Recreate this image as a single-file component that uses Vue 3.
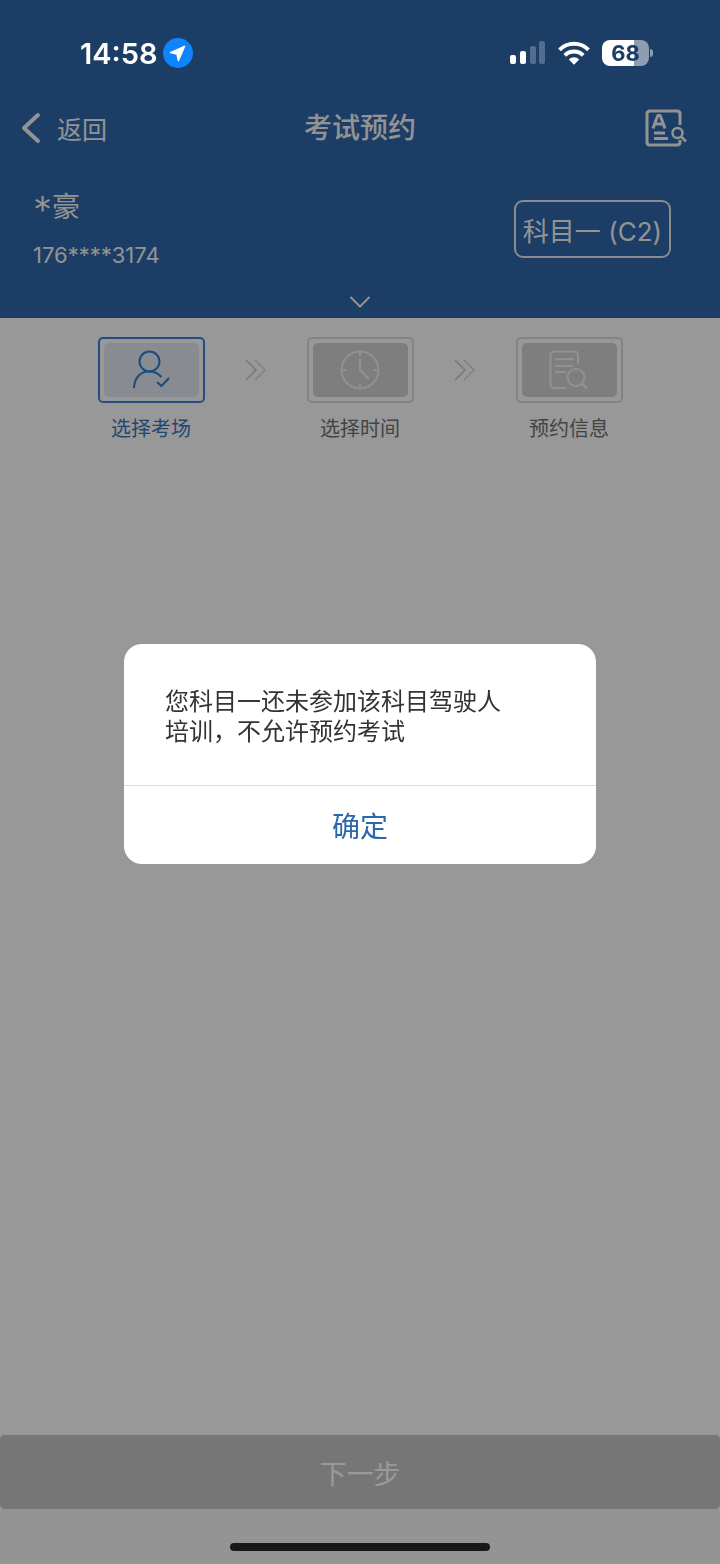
<script setup>
import { ref } from 'vue'

const steps = [
    { icon: 'user', label: '选择考场' },
    { icon: 'clock', label: '选择时间' },
    { icon: 'doc', label: '预约信息' },
]
const current = ref(0)
const showDialog = ref(true)
</script>

<template>
    <div class="page">
        <header class="header">
            <div class="status-bar">
                <div class="status-left">
                    <span class="time">14:58</span>
                    <svg width="30" height="30" viewBox="0 0 30 30">
                        <circle cx="15" cy="15" r="15" fill="#0f84fd" />
                        <path d="M21.5 8.5 L7.5 14.6 L14 16 L15.4 22.5 Z" fill="#fff" stroke="#fff" stroke-width="1.5"
                            stroke-linejoin="round" />
                    </svg>
                </div>
                <div class="status-right">
                    <svg width="36" height="24" viewBox="0 0 36 24" fill="#fff">
                        <rect x="0" y="14" width="6" height="9" rx="2" />
                        <rect x="10" y="10" width="6" height="13" rx="2" />
                        <rect x="20" y="5" width="6" height="18" rx="2" opacity=".25" />
                        <rect x="29" y="0" width="6" height="23" rx="2" opacity=".25" />
                    </svg>
                    <svg width="32" height="24" viewBox="0 0 32 24" fill="none" stroke="#fff" stroke-width="4">
                        <path d="M1.5 8.8 A20.5 20.5 0 0 1 30.5 8.8" />
                        <path d="M6.8 14.3 A13 13 0 0 1 25.2 14.3" />
                        <path d="M10.8 18.4 A7.4 7.4 0 0 1 21.2 18.4 L16 23.8 Z" fill="#fff" stroke="none" />
                    </svg>
                    <div class="battery"><span class="battery-level">68</span></div>
                </div>
            </div>
            <nav class="nav">
                <button class="back" type="button">
                    <svg width="20" height="34" viewBox="0 0 20 34" fill="none" stroke="currentColor" stroke-width="4"
                        stroke-linecap="round" stroke-linejoin="round">
                        <path d="M17 4 L3 17 L17 30" />
                    </svg>
                    <span>返回</span>
                </button>
                <h1 class="title">考试预约</h1>
                <button class="records" type="button" aria-label="考试记录">
                    <svg width="42" height="38" viewBox="0 0 42 38" fill="none" stroke="currentColor"
                        stroke-width="3" stroke-linejoin="round">
                        <path d="M35 16 V5 Q35 2 32 2 H5 Q2 2 2 5 V33 Q2 36 5 36 H32 Q35 36 35 33 V31" />
                        <path d="M8 19.5 L12.8 6.500 H15.200 L20 19.500 M10 15 H18" />
                        <path d="M9 24 H20 M9 29.500 H23" />
                        <circle cx="32.500" cy="24" r="5" stroke-width="2.500" />
                        <path d="M36 27.500 L41 32.500" stroke-width="2.500" />
                    </svg>
                </button>
            </nav>
            <section class="profile">
                <div class="profile-row">
                    <div>
                        <div class="name"><span class="name-mark">*</span>豪</div>
                        <div class="phone">176****3174</div>
                    </div>
                    <button class="subject" type="button">科目一 (C2)</button>
                </div>
                <button class="expand" type="button" aria-label="展开">
                    <svg width="22" height="12" viewBox="0 0 22 12" fill="none" stroke="currentColor"
                        stroke-width="2" stroke-linecap="round" stroke-linejoin="round">
                        <path d="M2 1.500 L11 10.500 L20 1.500" />
                    </svg>
                </button>
            </section>
        </header>

        <main class="main">
            <ol class="steps">
                <template v-for="(step, i) in steps" :key="step.icon">
                    <li v-if="i > 0" class="arrow" aria-hidden="true">
                        <svg width="22" height="24" viewBox="0 0 22 24" fill="none" stroke-width="1.500">
                            <path d="M1 2 L11 12 L1 22" stroke="#c6c6c6" />
                            <path d="M10 2 L20 12 L10 22" stroke="#d8d8d8" />
                        </svg>
                    </li>
                    <li class="step" :class="{ active: i === current }">
                        <div class="step-box">
                            <div class="step-inner">
                                <svg v-if="step.icon === 'user'" width="40" height="40" viewBox="0 0 40 40" fill="none"
                                    stroke="currentColor" stroke-width="2">
                                    <circle cx="18.500" cy="11.500" r="10" />
                                    <path d="M3 38 C3.500 28 9 21.500 18 21.500 C23 21.500 27.500 23.500 30.500 27" />
                                    <path d="M26 32 L30.500 36 L38 28" />
                                </svg>
                                <svg v-else-if="step.icon === 'clock'" width="40" height="40" viewBox="0 0 40 40"
                                    fill="none" stroke="currentColor" stroke-width="2">
                                    <circle cx="20" cy="20" r="18.500" />
                                    <path d="M20 1 V6 M20 34 V39 M1 20 H6 M34 20 H39" />
                                    <path d="M20 9 V20 L29 29" />
                                </svg>
                                <svg v-else width="40" height="40" viewBox="0 0 40 40" fill="none"
                                    stroke="currentColor" stroke-width="2">
                                    <path d="M29 14 V5 Q29 1.500 25.500 1.500 H5 Q1.500 1.500 1.500 5 V34.500 Q1.500 38 5 38 H17" />
                                    <path d="M6 9 H25 M6 16 H24 M6 22 H17" />
                                    <circle cx="27" cy="27.500" r="8.500" />
                                    <path d="M32.500 33.500 L38 38.500" stroke-width="2.500" />
                                </svg>
                            </div>
                        </div>
                        <span class="step-label">{{ step.label }}</span>
                    </li>
                </template>
            </ol>
        </main>

        <footer class="footer">
            <button class="next" type="button">下一步</button>
            <div class="home-indicator"></div>
        </footer>

        <div v-if="showDialog" class="mask">
            <div class="dialog" role="dialog" aria-modal="true">
                <div class="dialog-body">
                    <p>您科目一还未参加该科目驾驶人培训，不允许预约考试</p>
                </div>
                <button class="confirm" type="button" @click="showDialog = false">确定</button>
            </div>
        </div>
    </div>
</template>

<style>
body {
    margin: 0;
}
</style>

<style scoped>
.page {
    display: flex;
    flex-direction: column;
    min-height: 100vh;
    background: #fefefe;
    font-family: Inter, "Noto Sans CJK SC", sans-serif;
}

button {
    margin: 0;
    padding: 0;
    border: 0;
    background: none;
    color: inherit;
    font-family: inherit;
    cursor: pointer;
}

svg {
    display: block;
}

.header {
    background: #2d66aa;
    color: #fff;
}

/* system bars stay above the mask */
.status-bar {
    position: relative;
    z-index: 20;
    display: flex;
    align-items: center;
    justify-content: space-between;
    height: 106px;
    padding: 0 71px 0 80px;
}

.status-left {
    display: flex;
    align-items: center;
    gap: 5px;
}

.time {
    font-size: 29px;
    font-weight: 600;
}

.status-right {
    display: flex;
    align-items: center;
    gap: 12px;
}

.battery {
    position: relative;
    width: 47px;
    height: 26px;
    border-radius: 8px;
    background: linear-gradient(to right, #fff 68%, #8d9eb3 68%);
    color: #1b3d66;
    text-align: center;
}

.battery::after {
    content: "";
    position: absolute;
    top: 9px;
    right: -4px;
    width: 3px;
    height: 8px;
    border-radius: 0 4px 4px 0;
    background: #8d9eb3;
}

.battery-level {
    display: block;
    font-size: 22px;
    font-weight: 700;
    line-height: 26px;
}

.nav {
    display: grid;
    grid-template-columns: 1fr auto 1fr;
    align-items: center;
    height: 44px;
    padding: 0 33px 0 21px;
    color: #f6f6f6;
}

.back {
    display: flex;
    align-items: center;
    gap: 16px;
    font-size: 25px;
}

.title {
    margin: 0 0 0 12px;
    font-size: 28px;
    font-weight: 500;
    line-height: 40px;
}

.records {
    justify-self: end;
}

.profile {
    display: flex;
    flex-direction: column;
    height: 168px;
    color: #f6f6f6;
}

.profile-row {
    display: flex;
    flex: 1;
    align-items: center;
    justify-content: space-between;
    padding: 16px 49px 0 33px;
}

.name {
    font-size: 28px;
    line-height: 48px;
}

.name-mark {
    font-size: 38px;
    font-weight: 300;
    line-height: 1;
    vertical-align: sub;
}

.phone {
    font-size: 22px;
    line-height: 48px;
}

.subject {
    height: 58px;
    margin-bottom: 4px;
    padding: 0 7px;
    border: 2px solid #e4e8ec;
    border-radius: 9px;
    font-size: 26px;
}

.expand {
    align-self: center;
    margin-bottom: 10px;
}

.main {
    flex: 1;
}

.steps {
    display: flex;
    justify-content: center;
    gap: 40px;
    margin: 0;
    padding: 19px 0 0;
    list-style: none;
}

.arrow {
    display: flex;
    align-items: center;
    height: 66px;
}

.step {
    display: flex;
    flex-direction: column;
    align-items: center;
    width: 107px;
    color: #707070;
}

.step-box {
    box-sizing: border-box;
    width: 100%;
    height: 66px;
    padding: 4px;
    border: 2px solid #dadada;
    border-radius: 5px;
}

.step-inner {
    display: flex;
    align-items: center;
    justify-content: center;
    height: 100%;
    border-radius: 5px;
    background: #d2d2d2;
    color: #f2f2f2;
}

.step-label {
    margin-top: 11px;
    font-size: 20px;
    line-height: 30px;
    white-space: nowrap;
}

.active {
    color: #3a74be;
}

.active .step-box {
    border-color: #3f7fd8;
}

.active .step-inner {
    background: #e4e8f4;
    color: #2f7fd0;
}

.footer {
    background: #f7f7f7;
}

.next {
    display: block;
    width: 100%;
    height: 74px;
    border-radius: 5px;
    background: #c5c5c5;
    color: #fff;
    font-size: 27px;
}

.home-indicator {
    position: relative;
    z-index: 20;
    width: 36%;
    height: 8px;
    margin: 34px auto 13px;
    border-radius: 4px;
    background: #181818;
}

.mask {
    position: fixed;
    inset: 0;
    z-index: 10;
    display: flex;
    align-items: center;
    justify-content: center;
    padding-bottom: 56px;
    background: rgba(0, 0, 0, .4);
}

.dialog {
    width: 472px;
    max-width: 90%;
    border-radius: 18px;
    background: #fff;
    overflow: hidden;
}

.dialog-body {
    padding: 43px 41px 38px;
    color: #333;
}

.dialog-body p {
    max-width: 344px;
    margin: 0;
    font-size: 24px;
    line-height: 30px;
}

.confirm {
    display: block;
    width: 100%;
    height: 79px;
    border-top: 1px solid #ddd;
    color: #2d66aa;
    font-size: 28px;
}
</style>
